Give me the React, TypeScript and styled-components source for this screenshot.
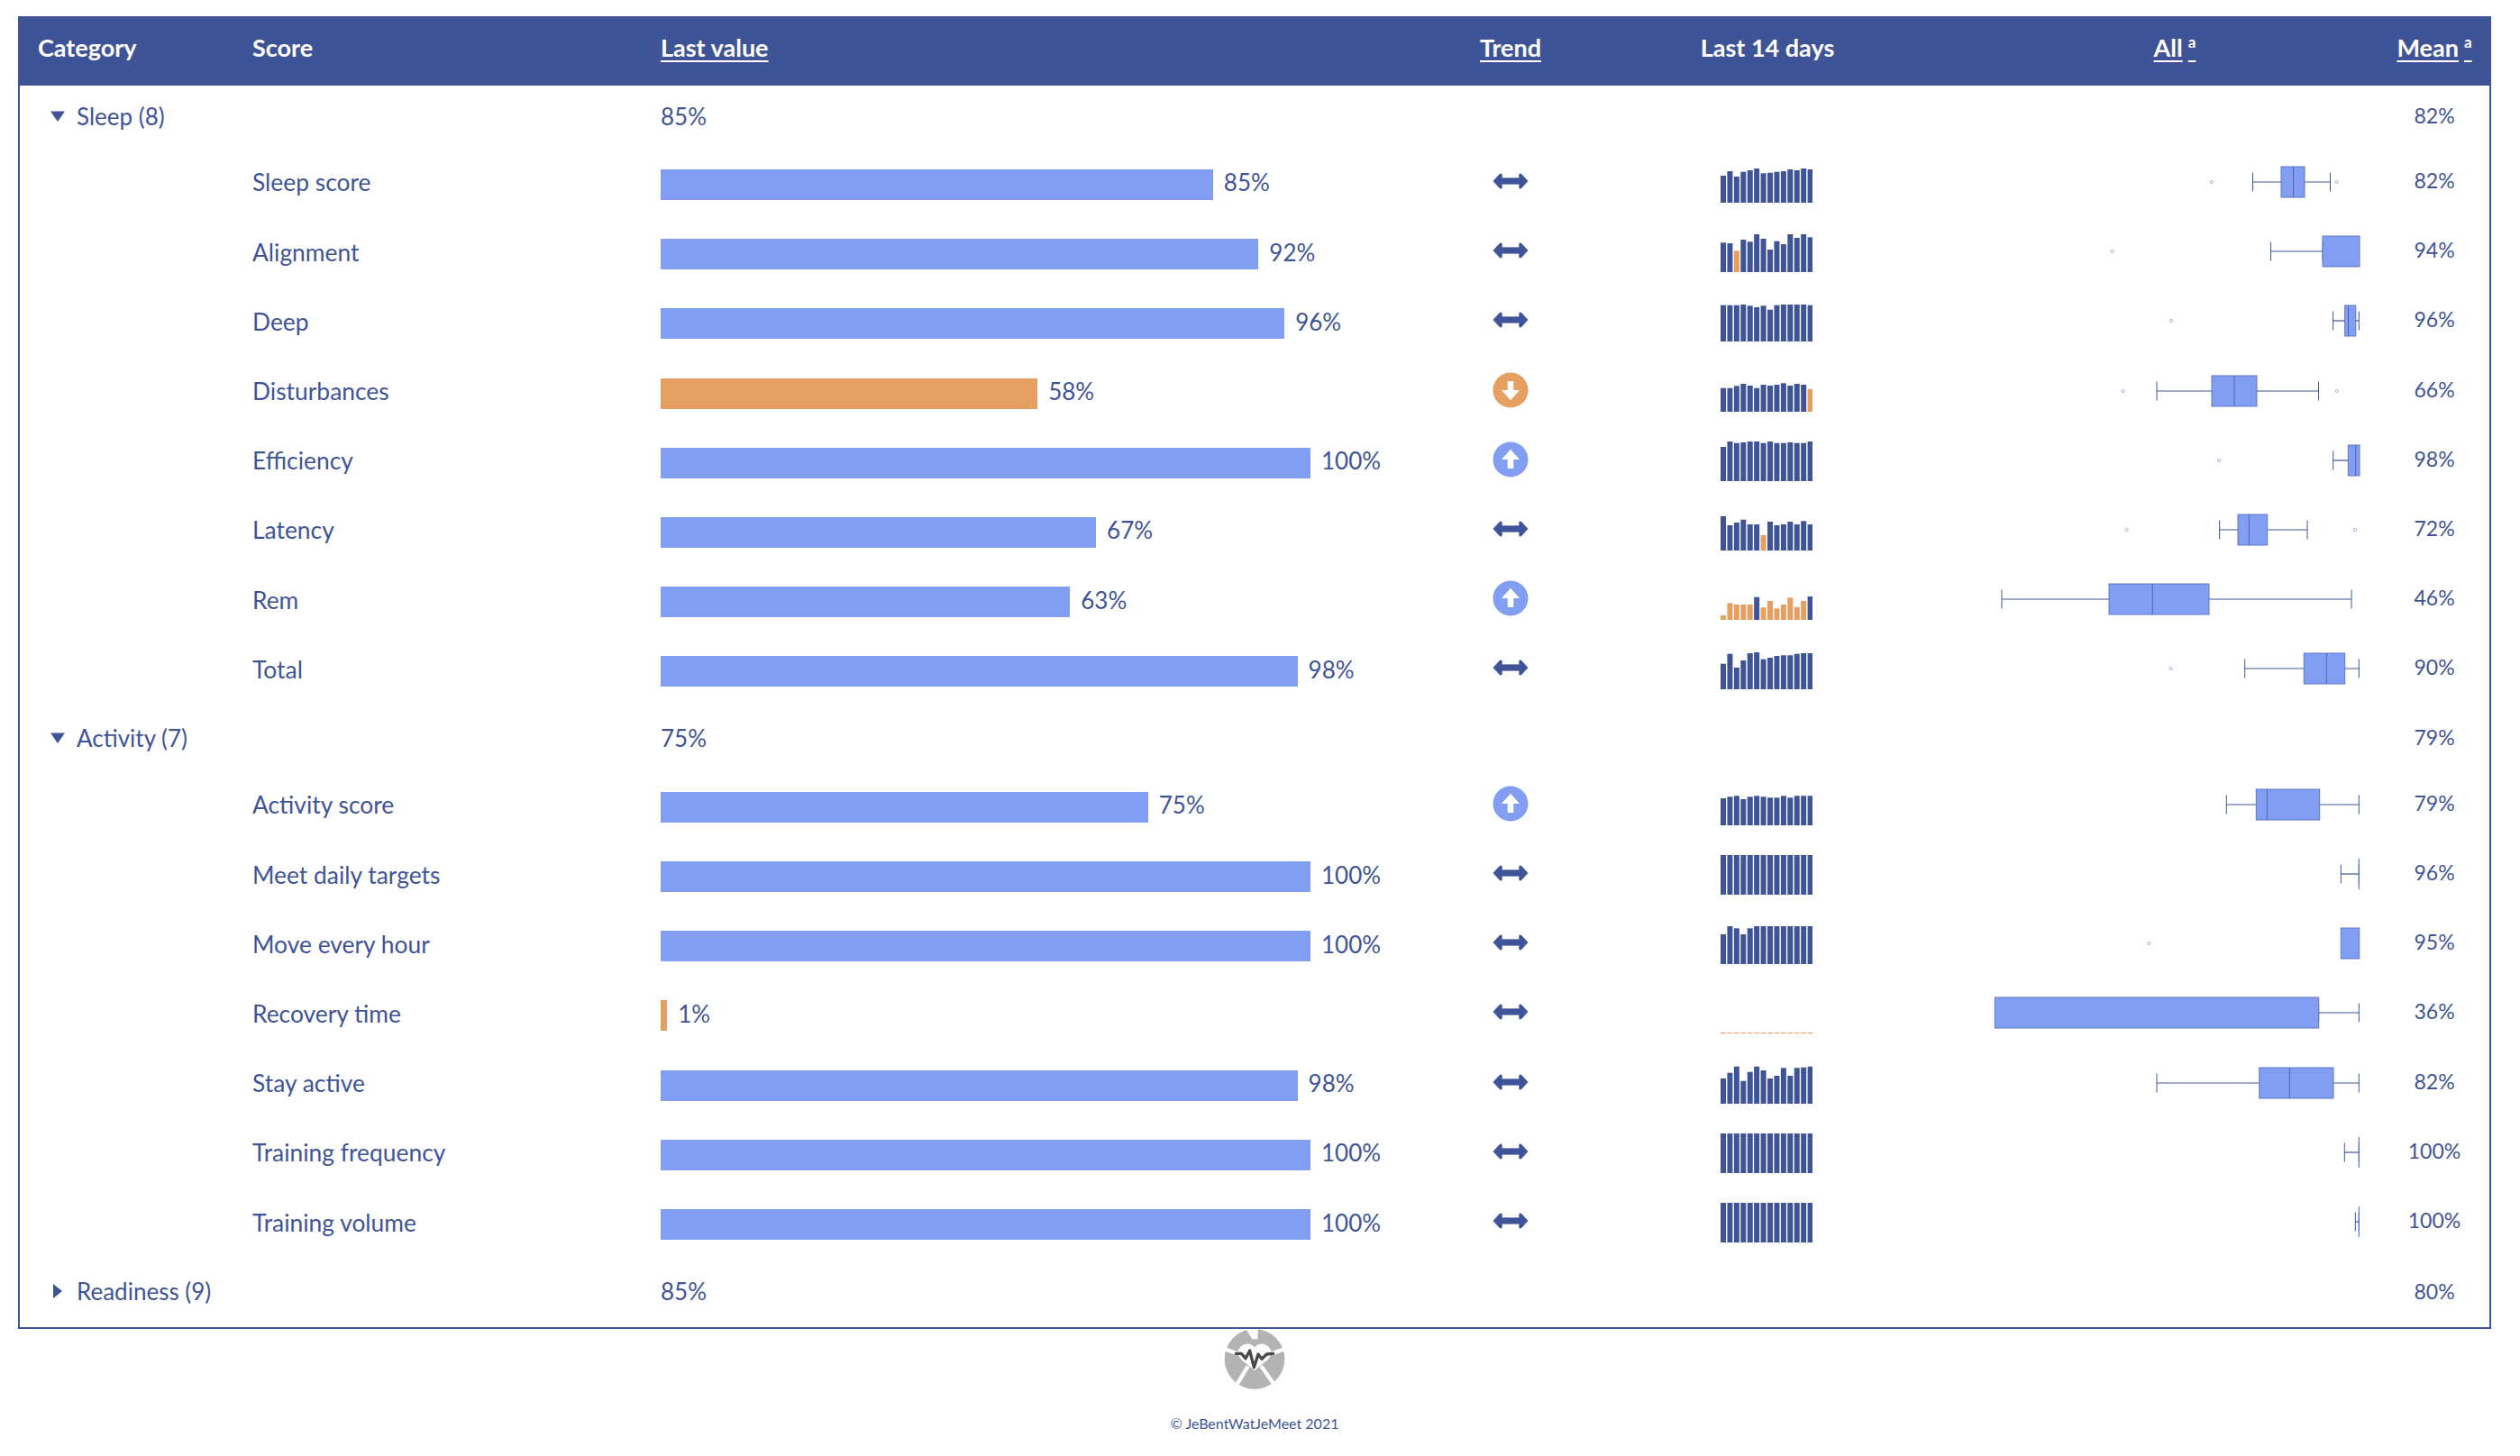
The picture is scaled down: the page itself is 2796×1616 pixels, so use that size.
import React from "react"
import styled, { createGlobalStyle } from "styled-components"

const navy = "#3f5497"
const blue = "#829ef3"
const orange = "#e59f60"
const boxStroke = "#5f78c8"

const COLUMNS = "258px 453px 883px 120px 450px 454px 122px"
const ROW_HEIGHT = 77.2

const GlobalStyle = createGlobalStyle`
	html, body {
		margin: 0;
		padding: 0;
		background: #fff;
	}
	body {
		font-family: "Lato", "Open Sans", sans-serif;
		color: ${navy};
	}
`

const Page = styled.div`
	width: 2744px;
	padding: 18px 32px 0 20px;
`

const Table = styled.div`
	border: 2px solid ${navy};
	border-top: 0;
`

const HeaderRow = styled.div`
	display: grid;
	grid-template-columns: ${COLUMNS};
	height: 77px;
	margin: 0 -2px;
	padding: 0 2px 8px;
	box-sizing: border-box;
	align-items: center;
	background: ${navy};
	color: #fff;
	font-size: 27px;
	font-weight: 700;
`

const HeadCell = styled.div<{ $center?: boolean; $first?: boolean; $sortable?: boolean }>`
	text-align: ${(p) => (p.$center ? "center" : "left")};
	padding-left: ${(p) => (p.$first ? "20px" : "0")};
	text-decoration: ${(p) => (p.$sortable ? "underline" : "none")};
	text-underline-offset: 4px;
	text-decoration-thickness: 2px;
`

const Sup = styled.sup`
	font-size: 17px;
	line-height: 0;
	margin-left: 6px;
	vertical-align: 10px;
`

const Row = styled.div<{ $height: number }>`
	display: grid;
	grid-template-columns: ${COLUMNS};
	height: ${(p) => p.$height}px;
	align-items: center;
	font-size: 26px;
`

const GroupLabel = styled.div`
	display: flex;
	align-items: center;
	padding-left: 34px;
	padding-bottom: 4px;
	gap: 13px;
`

const Caret = styled.svg`
	width: 16px;
	height: 16px;
	flex: none;
`

const GroupValue = styled.div`
	grid-column: 3;
	padding-bottom: 4px;
`

const ScoreName = styled.div`
	grid-column: 2;
	padding-bottom: 5px;
	font-size: 26.4px;
`

const BarCell = styled.div`
	display: flex;
	align-items: center;
	gap: 12px;
`

const Bar = styled.div<{ $low: boolean }>`
	height: 34px;
	background: ${(p) => (p.$low ? orange : blue)};
`

const BarLabel = styled.span`
	padding-bottom: 5px;
`

const IconCell = styled.div`
	display: flex;
	justify-content: center;
	padding-bottom: 8px;
`

const SparkCell = styled.div`
	display: flex;
	justify-content: center;
	padding: 0 2px 4px 0;
`

const BoxCell = styled.div`
	padding: 0 0 6px 14px;
	display: flex;
`

const MeanCell = styled.div<{ $group?: boolean }>`
	grid-column: 7;
	font-size: 23px;
	text-align: center;
	padding-bottom: ${(p) => (p.$group ? "5px" : "10px")};
`

const Footer = styled.div`
	display: flex;
	flex-direction: column;
	align-items: center;
`

const Logo = styled.svg`
	display: block;
	width: 68px;
	height: 67px;
`

const Copyright = styled.div`
	margin-top: 28px;
	font-size: 16px;
`

const TrendSame = () => (
	<svg width="40" height="18" viewBox="0 0 40 18">
		<path
			d="M0.8 9 L7.8 1.4 Q9.4 0 10.4 1.6 L10.4 5.7 L29.6 5.7 L29.6 1.6 Q30.6 0 32.2 1.4 L39.2 9 L32.2 16.6 Q30.6 18 29.6 16.4 L29.6 12.3 L10.4 12.3 L10.4 16.4 Q9.4 18 7.8 16.6 Z"
			fill={navy}
			stroke={navy}
			strokeWidth="0.6"
			strokeLinejoin="round"
		/>
	</svg>
)

const TrendCircle = ({ up }: { up: boolean }) => (
	<svg width="40" height="40" viewBox="0 0 40 40">
		<circle cx="20" cy="20" r="19.5" fill={up ? blue : orange} />
		<path
			d={
				up
					? "M20 8.8 L30 20 L23.3 20 L23.3 30 L16.7 30 L16.7 20 L10 20 Z"
					: "M20 31.2 L30 20 L23.3 20 L23.3 10 L16.7 10 L16.7 20 L10 20 Z"
			}
			fill="#fff"
		/>
	</svg>
)

// 14 bars per row, low holds the indexes drawn in orange
const Spark = ({ values, low = [] }: { values: number[]; low?: number[] }) => (
	<svg width="102" height="44" viewBox="0 0 102 44">
		{values.map((v, i) => (
			<rect
				key={i}
				x={i * 7.43}
				y={44 - v}
				width="6"
				height={v}
				fill={low.includes(i) ? orange : navy}
			/>
		))}
	</svg>
)

interface IBox {
	readonly lo?: number
	readonly hi?: number
	readonly q1?: number
	readonly q3?: number
	readonly med?: number
	readonly out?: number[]
	readonly tall?: number
}

const BoxPlot = ({ lo, hi, q1, q3, med, out = [], tall }: IBox) => {
	const cy = 30
	const hasBox = q1 !== undefined && q3 !== undefined
	return (
		<svg width="440" height="60" viewBox="0 0 440 60">
			{lo !== undefined && hi !== undefined && (
				<line x1={lo} x2={hi} y1={cy} y2={cy} stroke={navy} strokeWidth="1.2" />
			)}
			{lo !== undefined && (
				<line x1={lo} x2={lo} y1={cy - 10.5} y2={cy + 10.5} stroke={navy} strokeWidth="1" />
			)}
			{hi !== undefined && (
				<line x1={hi} x2={hi} y1={cy - 10.5} y2={cy + 10.5} stroke={navy} strokeWidth="1" />
			)}
			{hasBox && (
				<rect
					x={q1}
					y={cy - 17}
					width={q3! - q1!}
					height="34"
					fill={blue}
					stroke={boxStroke}
					strokeWidth="1"
				/>
			)}
			{med !== undefined && (
				<line x1={med} x2={med} y1={cy - 17} y2={cy + 17} stroke={navy} strokeWidth="1" opacity="0.75" />
			)}
			{tall !== undefined && (
				<line x1={tall} x2={tall} y1={cy - 17} y2={cy + 17} stroke={boxStroke} strokeWidth="1.2" />
			)}
			{out.map((x) => (
				<circle key={x} cx={x} cy={cy} r="1.6" fill="#fff" stroke="#a9b6dd" strokeWidth="1" />
			))}
		</svg>
	)
}

interface IScore {
	readonly name: string
	readonly value: number
	readonly low?: boolean
	readonly trend?: "up" | "down"
	readonly spark: number[]
	readonly sparkLow?: number[]
	readonly box: IBox
	readonly mean: number
}

const FULL = Array(14).fill(44)

const sleep: IScore[] = [
	{
		name: "Sleep score",
		value: 85,
		spark: [30, 35, 29, 34.3, 36, 38, 32.7, 33.3, 34.3, 35, 37, 36, 38, 37],
		box: { lo: 299.5, hi: 385.5, q1: 331, q3: 357, med: 344.6, out: [254, 392.6] },
		mean: 82,
	},
	{
		name: "Alignment",
		value: 92,
		spark: [32.7, 32, 23.7, 36, 33.7, 42, 37, 25, 34.3, 31, 42, 38, 42, 38.7],
		sparkLow: [2],
		box: { lo: 319.5, hi: 377, q1: 377, q3: 418, out: [143.5] },
		mean: 94,
	},
	{
		name: "Deep",
		value: 96,
		spark: [40.3, 40.3, 40.3, 41, 39.7, 38, 39.7, 35.3, 40.3, 41, 41, 41, 41, 40.3],
		box: { lo: 388.6, hi: 417.3, q1: 401.6, q3: 413.8, med: 405.5, out: [209] },
		mean: 96,
	},
	{
		name: "Disturbances",
		value: 58,
		low: true,
		trend: "down",
		spark: [26.3, 26.3, 28.7, 31, 29, 26.3, 30, 29, 30, 31.7, 29, 31, 30, 25.3],
		sparkLow: [13],
		box: { lo: 193, hi: 372.5, q1: 254, q3: 304, med: 279, out: [155.6, 392.6] },
		mean: 66,
	},
	{
		name: "Efficiency",
		value: 100,
		trend: "up",
		spark: [38, 44, 42.3, 43, 44, 44, 42.3, 44, 42.3, 42.3, 43, 42.3, 42.3, 44],
		box: { lo: 388.7, hi: 417.5, q1: 405.3, q3: 418, med: 413.7, out: [262] },
		mean: 98,
	},
	{
		name: "Latency",
		value: 67,
		spark: [38, 28, 31, 34.3, 29, 29, 17, 32, 28, 29, 32, 29, 32.7, 29],
		sparkLow: [6],
		box: { lo: 262.7, hi: 360, q1: 283, q3: 315.7, med: 295.3, out: [159.7, 413] },
		mean: 72,
	},
	{
		name: "Rem",
		value: 63,
		trend: "up",
		spark: [5, 18.7, 17, 17, 17, 25.3, 13.7, 21, 12.7, 17, 24.7, 14.3, 21, 26],
		sparkLow: [0, 1, 2, 3, 4, 6, 7, 8, 9, 10, 11, 12],
		box: { lo: 21, hi: 409, q1: 140, q3: 251, med: 188.3 },
		mean: 46,
	},
	{
		name: "Total",
		value: 98,
		spark: [28.3, 39.3, 24, 32, 40, 41, 33.3, 35, 37, 37.7, 37.7, 39.3, 40, 40],
		box: { lo: 290.7, hi: 417.3, q1: 356.3, q3: 401.7, med: 381.3, out: [208.7] },
		mean: 90,
	},
]

const activity: IScore[] = [
	{
		name: "Activity score",
		value: 75,
		trend: "up",
		spark: [30, 31.7, 32.7, 29, 31.7, 32.7, 31.7, 30.7, 30.7, 32.7, 30.7, 32.7, 32.7, 32.7],
		box: { lo: 270.3, hi: 417.3, q1: 303.3, q3: 373.7, med: 315.3 },
		mean: 79,
	},
	{
		name: "Meet daily targets",
		value: 100,
		spark: FULL,
		box: { lo: 397.3, hi: 417.3, tall: 417.3 },
		mean: 96,
	},
	{
		name: "Move every hour",
		value: 100,
		spark: [33, 42, 39.7, 33, 39.7, 42, 42, 42, 42, 42, 42, 42, 42, 42],
		box: { q1: 397.3, q3: 417.7, out: [184.3] },
		mean: 95,
	},
	{
		name: "Recovery time",
		value: 1,
		low: true,
		spark: Array(14).fill(1),
		sparkLow: [0, 1, 2, 3, 4, 5, 6, 7, 8, 9, 10, 11, 12, 13],
		box: { hi: 417.3, q1: 13.3, q3: 372.7, lo: 372.7 },
		mean: 36,
	},
	{
		name: "Stay active",
		value: 98,
		spark: [28, 34.3, 41.3, 25.3, 35.3, 41.3, 37, 28, 31, 39.7, 31, 39.7, 40.3, 41.3],
		box: { lo: 193, hi: 417.3, q1: 306.7, q3: 389, med: 340.3 },
		mean: 82,
	},
	{
		name: "Training frequency",
		value: 100,
		spark: FULL,
		box: { lo: 401.3, hi: 417.3, tall: 417.3 },
		mean: 100,
	},
	{
		name: "Training volume",
		value: 100,
		spark: FULL,
		box: { lo: 413.3, hi: 417.3, tall: 417.3 },
		mean: 100,
	},
]

const Group = ({
	label,
	value,
	mean,
	height,
	open = true,
}: {
	label: string
	value: number
	mean: number
	height: number
	open?: boolean
}) => (
	<Row $height={height}>
		<GroupLabel>
			<Caret viewBox="0 0 16 16">
				<path d={open ? "M0 2.5 H16 L8 14 Z" : "M3 0 L13 8 L3 16 Z"} fill={navy} />
			</Caret>
			{label}
		</GroupLabel>
		<GroupValue>{value}%</GroupValue>
		<MeanCell $group>{mean}%</MeanCell>
	</Row>
)

const ScoreRow = ({ score }: { score: IScore }) => (
	<Row $height={ROW_HEIGHT}>
		<ScoreName>{score.name}</ScoreName>
		<BarCell>
			<Bar $low={!!score.low} style={{ width: `${score.value * 7.21}px` }} />
			<BarLabel>{score.value}%</BarLabel>
		</BarCell>
		<IconCell>
			{score.trend ? <TrendCircle up={score.trend === "up"} /> : <TrendSame />}
		</IconCell>
		<SparkCell>
			<Spark values={score.spark} low={score.sparkLow} />
		</SparkCell>
		<BoxCell>
			<BoxPlot {...score.box} />
		</BoxCell>
		<MeanCell>{score.mean}%</MeanCell>
	</Row>
)

const App = () => (
	<Page>
		<GlobalStyle />
		<Table>
			<HeaderRow>
				<HeadCell $first>Category</HeadCell>
				<HeadCell>Score</HeadCell>
				<HeadCell>
					<HeadCell as="span" $sortable>
						Last value
					</HeadCell>
				</HeadCell>
				<HeadCell $center $sortable>
					Trend
				</HeadCell>
				<HeadCell $center>Last 14 days</HeadCell>
				<HeadCell $center $sortable>
					All<Sup>a</Sup>
				</HeadCell>
				<HeadCell $center $sortable>
					Mean<Sup>a</Sup>
				</HeadCell>
			</HeaderRow>
			<Group label="Sleep (8)" value={85} mean={82} height={71.4} />
			{sleep.map((s) => (
				<ScoreRow key={s.name} score={s} />
			))}
			<Group label="Activity (7)" value={75} mean={79} height={73.4} />
			{activity.map((s) => (
				<ScoreRow key={s.name} score={s} />
			))}
			<Group label="Readiness (9)" value={85} mean={80} height={75.4} open={false} />
		</Table>
		<Footer>
			<Logo viewBox="0 0 204 201">
				<circle cx="102" cy="100" r="100" fill="#b3b3b3" />
				<path d="M72 -2 L114 -2 L112 34 L94 34 Z" fill="#fff" />
				<path
					d="M-4 64 L44 82 M208 64 L160 82 M40 190 L80 124 M168 186 L124 124"
					stroke="#fff"
					strokeWidth="13"
					fill="none"
				/>
				<path
					d="M102 62 C92 46 66 44 50 66 C40 80 50 94 62 106 L102 138 L142 106 C154 94 164 80 154 66 C138 44 112 46 102 62 Z"
					fill="#fff"
				/>
				<path
					d="M40 82 L58 82 L72 98 L86 72 L100 128 L114 84 L126 100 L142 84 L164 82"
					stroke="#4a4a4a"
					strokeWidth="10"
					strokeLinejoin="round"
					strokeLinecap="round"
					fill="none"
				/>
			</Logo>
			<Copyright>© JeBentWatJeMeet 2021</Copyright>
		</Footer>
	</Page>
)

export default App
